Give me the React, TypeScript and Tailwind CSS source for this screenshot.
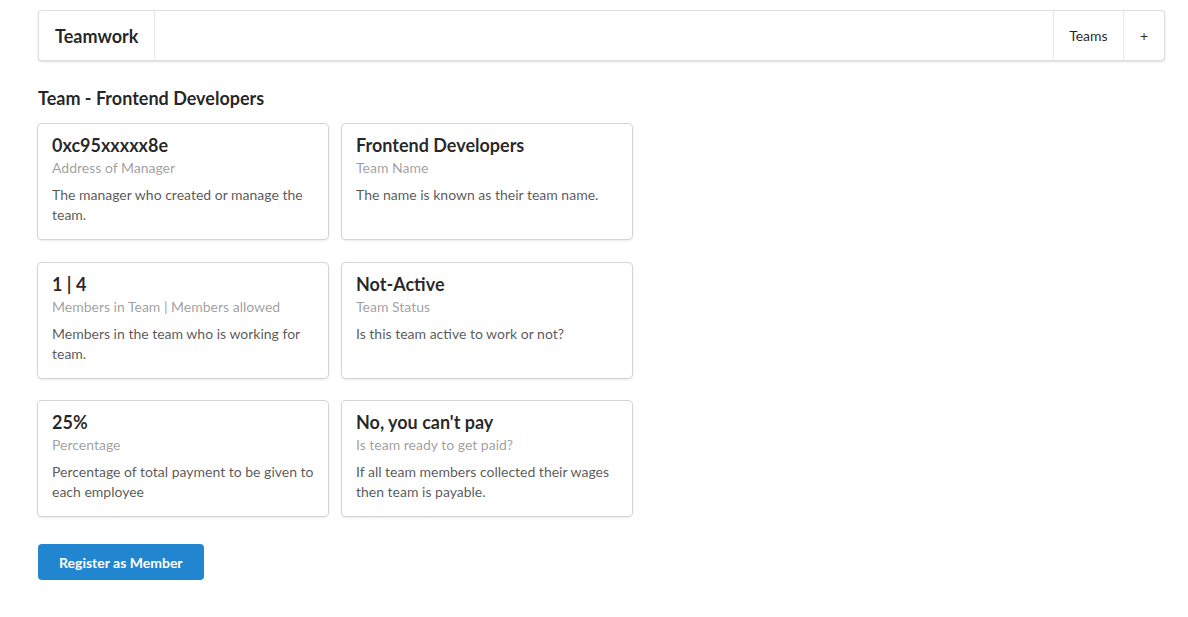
const cards = [
  { header: "0xc95xxxxx8e", meta: "Address of Manager", description: "The manager who created or manage the team." },
  { header: "Frontend Developers", meta: "Team Name", description: "The name is known as their team name." },
  { header: "1 | 4", meta: "Members in Team | Members allowed", description: "Members in the team who is working for team." },
  { header: "Not-Active", meta: "Team Status", description: "Is this team active to work or not?" },
  { header: "25%", meta: "Percentage", description: "Percentage of total payment to be given to each employee" },
  { header: "No, you can't pay", meta: "Is team ready to get paid?", description: "If all team members collected their wages then team is payable." },
];

const Card = ({ header, meta, description }: { header: string; meta: string; description: string }) => (
  <div className="rounded-[4px] bg-white px-[14px] pt-[11px] pb-[14px] shadow-[0_1px_3px_0_#d4d4d5,0_0_0_1px_#d4d4d5]">
    <div className="-mt-[1px] mb-[1px] text-[18px] font-bold leading-[23px] text-[rgba(0,0,0,0.85)]">{header}</div>
    <div className="text-[14px] leading-[20px] text-[rgba(0,0,0,0.4)]">{meta}</div>
    <div className="mt-[7px] text-[14px] leading-[20px] text-[rgba(0,0,0,0.68)]">{description}</div>
  </div>
);

const App = () => {
  return (
    <div className="min-h-screen bg-white pt-[10px] font-['Lato','Open_Sans',sans-serif] text-[14px] text-[rgba(0,0,0,0.87)]">
      <div className="ml-[38px] w-[1127px]">
        <div className="flex h-[51px] rounded-[4px] border border-[rgba(34,36,38,0.15)] bg-white shadow-[0_1px_2px_0_rgba(34,36,38,0.15)]">
          <div className="flex items-center border-r border-[rgba(34,36,38,0.1)] px-[16px] pt-[2px] text-[18px] font-bold text-[rgba(0,0,0,0.87)]">
            Teamwork
          </div>
          <div className="ml-auto flex w-[70px] items-center justify-center border-l border-[rgba(34,36,38,0.1)]">Teams</div>
          <div className="flex items-center border-l border-[rgba(34,36,38,0.1)] px-[16px]">+</div>
        </div>

        <h3 className="mt-[26px] text-[18px] font-bold leading-[23px] text-[rgba(0,0,0,0.87)]">Team - Frontend Developers</h3>

        <div className="mt-[14px] grid w-[594px] grid-cols-[290px_290px] gap-x-[14px] gap-y-[23.5px]">
          {cards.map((c) => (
            <Card key={c.header} {...c} />
          ))}
        </div>

        <button className="mt-[28px] h-[36px] rounded-[4px] bg-[#2185d0] px-[21px] text-[14px] font-bold text-white">
          Register as Member
        </button>
      </div>
    </div>
  );
};

export default App;
